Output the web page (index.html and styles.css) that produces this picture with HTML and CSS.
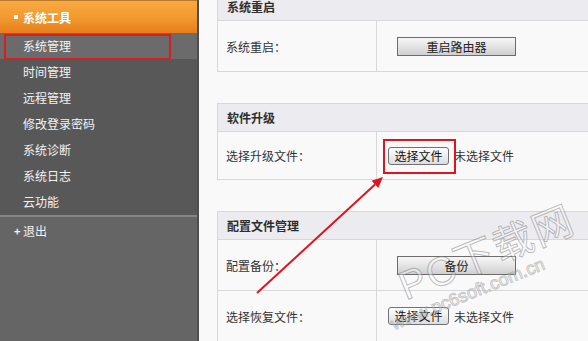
FILE: index.html
```html
<!DOCTYPE html>
<html>
<head>
  <meta charset="utf-8">
  <title>系统工具</title>
  <link rel="stylesheet" href="styles.css">
</head>
<body>
  <div class="page">
    <aside class="sidebar">
      <div class="side-title"><span class="dot"></span>系统工具</div>
      <ul class="menu">
        <li class="menu-item active">系统管理<span class="mark"></span></li>
        <li class="menu-item">时间管理</li>
        <li class="menu-item">远程管理</li>
        <li class="menu-item">修改登录密码</li>
        <li class="menu-item">系统诊断</li>
        <li class="menu-item">系统日志</li>
        <li class="menu-item">云功能</li>
      </ul>
      <div class="logout"><span class="plus">+</span>退出</div>
    </aside>

    <main class="main">
      <!-- 系统重启 -->
      <section class="panel">
        <div class="panel-head">系统重启</div>
        <div class="row">
          <div class="cell-label">系统重启：</div>
          <div class="cell-value wide-pad"><button class="btn">重启路由器</button></div>
        </div>
      </section>

      <!-- 软件升级 -->
      <section class="panel">
        <div class="panel-head">软件升级</div>
        <div class="row short">
          <div class="cell-label">选择升级文件：</div>
          <div class="cell-value">
            <span class="file-wrap">
              <button class="file-btn">选择文件</button>
              <span class="mark"></span>
            </span>
            <span class="file-name">未选择文件</span>
          </div>
        </div>
      </section>

      <!-- 配置文件管理 -->
      <section class="panel">
        <div class="panel-head">配置文件管理</div>
        <div class="row">
          <div class="cell-label">配置备份：</div>
          <div class="cell-value wide-pad"><button class="btn">备份</button></div>
        </div>
        <div class="row">
          <div class="cell-label">选择恢复文件：</div>
          <div class="cell-value">
            <span class="file-wrap"><button class="file-btn">选择文件</button></span>
            <span class="file-name">未选择文件</span>
          </div>
        </div>
      </section>
    </main>

    <svg class="arrow" width="588" height="341" viewBox="0 0 588 341">
      <line x1="257" y1="293" x2="375" y2="184.5" stroke="#e0141c" stroke-width="2"/>
      <polygon points="383,177 378.3,188.1 371.5,180.7" fill="#e0141c"/>
    </svg>

    <div class="watermark">
      <span class="wm-big">PC下载网</span>
      <span class="wm-url">www.pc6soft.com.cn</span>
    </div>
  </div>
</body>
</html>
```

FILE: styles.css
```css
* {
  margin: 0;
  padding: 0;
  box-sizing: border-box;
}

body {
  width: 588px;
  height: 341px;
  overflow: hidden;
  font-family: "Noto Sans CJK SC", "Liberation Sans", sans-serif;
  font-size: 12px;
  background: #f9f9f9;
  color: #333;
}

.page {
  position: relative;
  display: flex;
  height: 341px;
}

/* sidebar */
.sidebar {
  width: 199px;
  flex-shrink: 0;
  display: flex;
  flex-direction: column;
  background: #585858;
  border-right: 2px solid #4e4e4e;
}

.side-title {
  height: 33px;
  display: flex;
  align-items: center;
  padding-left: 14px;
  border-top: 1px solid #b8782e;
  background: linear-gradient(#f8a940 0%, #f29a30 50%, #e67e1a 100%);
  color: #fff;
  font-weight: bold;
  font-size: 12px;
}

.dot {
  width: 4px;
  height: 4px;
  background: #fff;
  margin-right: 5px;
}

.menu {
  list-style: none;
}

.menu-item {
  position: relative;
  height: 26px;
  line-height: 26px;
  padding-left: 23px;
  color: #f2f2f2;
}

.menu-item.active {
  background: #6b6b6b;
}

.menu-item .mark {
  position: absolute;
  left: 4px;
  top: 1px;
  width: 167px;
  height: 26px;
  border: 2px solid #d81e25;
}

.logout {
  flex: 1;
  border-top: 2px solid #858585;
  background: #656565;
  color: #f2f2f2;
  height: 28px;
  line-height: 28px;
  padding-left: 14px;
}

.plus {
  display: inline-block;
  width: 9px;
  font-size: 11px;
  font-weight: bold;
}

/* main */
.main {
  flex: 1;
  padding-left: 18px;
  margin-top: -8px;
  margin-right: -20px;
}

.panel {
  border: 1px solid #d8d8d8;
  border-right: none;
  margin-bottom: 31px;
  background: #f9f9f9;
}

.panel-head {
  height: 28px;
  line-height: 27px;
  padding-left: 9px;
  background: #ecebf0;
  border-bottom: 1px solid #d8d8d8;
  font-weight: bold;
  color: #2e2e2e;
}

.row {
  display: grid;
  grid-template-columns: 159px 1fr;
  height: 51px;
  border-bottom: 1px solid #d8d8d8;
}

.row:last-child {
  border-bottom: none;
  height: 50px;
}

.row.short {
  height: 47px;
}

.cell-label {
  display: flex;
  align-items: center;
  padding-left: 8px;
  border-right: 1px solid #d8d8d8;
}

.cell-value {
  display: flex;
  align-items: center;
  padding-left: 11px;
}

.cell-value.wide-pad {
  padding-left: 20px;
}

.btn {
  width: 119px;
  height: 19px;
  border: 1px solid #6c6c6c;
  background: linear-gradient(#f6f6f6 0%, #e4e4e4 50%, #cfcfcf 100%);
  font-family: inherit;
  font-size: 12px;
  color: #222;
  line-height: 17px;
}

.file-wrap {
  position: relative;
  display: inline-flex;
}

.file-btn {
  width: 61px;
  height: 18px;
  border: 1px solid #6f7378;
  border-radius: 3px;
  background: linear-gradient(#fdfdfd 0%, #eeeeee 50%, #dcdcdc 100%);
  font-family: inherit;
  font-size: 12px;
  color: #111;
  line-height: 16px;
}

.file-wrap .mark {
  position: absolute;
  left: -5px;
  top: -8px;
  width: 73px;
  height: 35px;
  border: 2px solid #e0141c;
}

.file-name {
  margin-left: 5px;
  color: #333;
}

/* overlays */
.arrow {
  position: absolute;
  left: 0;
  top: 0;
  pointer-events: none;
}

.watermark {
  position: absolute;
  left: 400px;
  top: 205px;
  width: 200px;
  height: 140px;
  pointer-events: none;
  transform: rotate(-22deg);
  transform-origin: left bottom;
}

.wm-big {
  position: absolute;
  left: 22px;
  top: 55px;
  font-size: 40px;
  letter-spacing: 2px;
  color: rgba(255, 255, 255, 0.35);
  -webkit-text-stroke: 1px rgba(110, 110, 110, 0.45);
  font-family: "Liberation Sans", "Noto Sans CJK SC", sans-serif;
  white-space: nowrap;
}

.wm-url {
  position: absolute;
  left: 0;
  top: 108px;
  font-size: 18px;
  color: rgba(255, 255, 255, 0.35);
  -webkit-text-stroke: 1px rgba(120, 120, 120, 0.4);
  font-family: "Liberation Sans", sans-serif;
  white-space: nowrap;
}
```
